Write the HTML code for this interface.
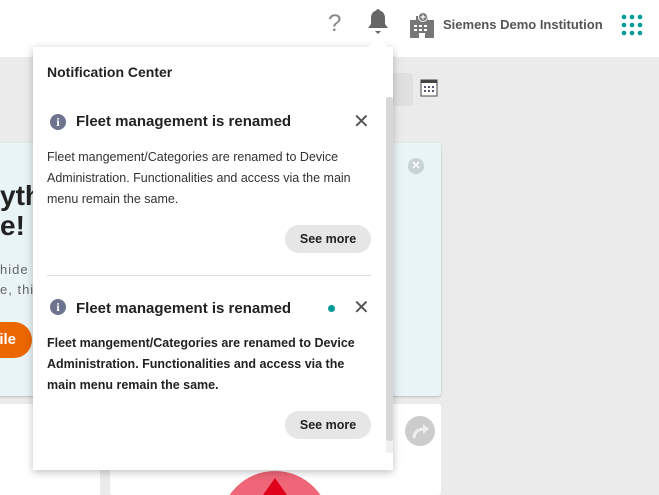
<!DOCTYPE html>
<html style="overflow:hidden;width:659px;height:495px"><head><style>
*{margin:0;padding:0;box-sizing:border-box}
html,body{width:659px;height:495px;overflow:hidden}
body{background:#ebebeb;font-family:"Liberation Sans",sans-serif}
#w{position:relative;width:659px;height:495px;overflow:hidden}
.hdr{position:absolute;left:0;top:0;width:659px;height:57px;background:#fff}
.abs{position:absolute}
.panel{position:absolute;left:33px;top:47px;width:360px;height:423px;background:#fff;box-shadow:0 2px 8px rgba(0,0,0,.25)}
.t{font-weight:bold;font-size:15px;color:#222}
.body{font-size:12.5px;line-height:21px;color:#333}
.btn{position:absolute;width:86px;height:28px;border-radius:14px;background:#e6e6e6;font-weight:bold;font-size:12.5px;text-align:center;line-height:28px;color:#222}
.info{position:absolute;width:16px;height:16px;border-radius:50%;background:#6e7390;color:#fff;font-size:12px;font-weight:bold;text-align:center;line-height:16px;font-family:"Liberation Serif",serif}
.x{position:absolute;font-size:20px;color:#555;line-height:20px}
svg{display:block}
</style></head><body><div id="w">
<div class="hdr"></div>
<div class="abs" style="left:328px;top:10px;font-size:24px;color:#888">?</div>
<svg class="abs" style="left:366px;top:8px" width="24" height="28" viewBox="0 0 24 28"><path d="M12 1c1 0 1.5.6 1.5 1.4C17 3.4 19 6 19 10v6l3 4H2l3-4v-6c0-4 2-6.6 5.5-7.6C10.5 1.6 11 1 12 1z" fill="#666"/><path d="M9 23h6l-3 3z" fill="#666"/></svg>
<svg class="abs" style="left:410px;top:12px" width="24" height="26" viewBox="0 0 24 26"><rect x="0" y="8" width="24" height="18" fill="#777"/><rect x="6" y="4" width="12" height="6" fill="#777"/><circle cx="13" cy="5" r="4.5" fill="#777" stroke="#fff" stroke-width="1"/><path d="M13 2.5v5M10.5 5h5" stroke="#fff" stroke-width="1.2"/><g fill="#fff"><rect x="4" y="13" width="3" height="2"/><rect x="9" y="13" width="3" height="2"/><rect x="14" y="13" width="3" height="2"/><rect x="4" y="17" width="3" height="2"/><rect x="9" y="17" width="3" height="2"/><rect x="14" y="17" width="3" height="2"/><rect x="9" y="21" width="6" height="5"/></g></svg>
<div class="abs" style="left:443px;top:17px;font-size:13px;font-weight:bold;color:#555">Siemens Demo Institution</div>
<svg class="abs" style="left:620px;top:14px" width="24" height="24"><g fill="#009999"><circle cx="4" cy="3" r="2.3"/><circle cx="12" cy="3" r="2.3"/><circle cx="20" cy="3" r="2.3"/><circle cx="4" cy="11" r="2.3"/><circle cx="12" cy="11" r="2.3"/><circle cx="20" cy="11" r="2.3"/><circle cx="4" cy="19" r="2.3"/><circle cx="12" cy="19" r="2.3"/><circle cx="20" cy="19" r="2.3"/></g></svg>
<div class="abs" style="left:380px;top:73px;width:33px;height:33px;background:#e0e0e0;border-radius:3px"></div>
<svg class="abs" style="left:420px;top:79px" width="18" height="18"><rect x="1" y="1" width="16" height="16" fill="#fff" stroke="#444"/><rect x="1" y="1" width="16" height="3" fill="#444"/><g fill="#557"><rect x="4" y="7" width="2" height="2"/><rect x="8" y="7" width="2" height="2"/><rect x="12" y="7" width="2" height="2"/><rect x="4" y="11" width="2" height="2"/><rect x="8" y="11" width="2" height="2"/><rect x="12" y="11" width="2" height="2"/></g></svg>
<div class="abs" style="left:-5px;top:143px;width:446px;height:253px;background:#e8f4f6;border-radius:3px;box-shadow:0 1px 2px rgba(0,0,0,.2)"></div>
<div class="abs" style="left:0;top:181px;font-size:28px;font-weight:bold;color:#222;line-height:30px">yth<br>e!</div>
<div class="abs" style="left:0;top:260px;font-size:13px;color:#666;line-height:20px;letter-spacing:1px">hide t<br>e, this</div>
<div class="abs" style="left:-30px;top:322px;width:62px;height:36px;border-radius:18px;background:#ec6602;color:#fff;font-size:15px;font-weight:bold;line-height:36px;text-align:right;padding-right:16px">ile</div>
<div class="abs" style="left:408px;top:158px;width:16px;height:16px;border-radius:50%;background:#c7d3d5;color:#fff;font-size:11px;font-weight:bold;text-align:center;line-height:16px">✕</div>
<div class="abs" style="left:0;top:404px;width:100px;height:91px;background:#fff"></div>
<div class="abs" style="left:110px;top:404px;width:331px;height:91px;background:#fff;border-radius:3px"></div>
<div class="abs" style="left:405px;top:416px;width:30px;height:30px;border-radius:50%;background:#ccc"></div>
<svg class="abs" style="left:405px;top:416px" width="30" height="30"><path d="M9 22c0-6 4-9 11-9" stroke="#eee" stroke-width="3" fill="none"/><path d="M18 8l6 5-6 5z" fill="#eee"/></svg>
<svg class="abs" style="left:220px;top:471px" width="110" height="24"><circle cx="55" cy="55" r="55" fill="#ee6677"/><path d="M55 7l12 17H43z" fill="#e0001a"/></svg>
<div class="panel">
 <div class="abs t" style="left:14px;top:17px;font-size:14px">Notification Center</div>
 <div class="abs" style="left:353px;top:50px;width:7px;height:356px;background:#f0f0f0"></div>
 <div class="abs" style="left:353px;top:50px;width:7px;height:344px;background:#d8d8d8;border-radius:3px"></div>
 <div class="info" style="left:17px;top:67px">i</div>
 <div class="abs t" style="left:43px;top:66px">Fleet management is renamed</div>
 <div class="x" style="left:320px;top:65px">✕</div>
 <div class="abs body" style="left:14px;top:100px;width:320px">Fleet mangement/Categories are renamed to Device Administration. Functionalities and access via the main menu remain the same.</div>
 <div class="btn" style="left:252px;top:178px">See more</div>
 <div class="abs" style="left:14px;top:228px;width:324px;height:1px;background:#ddd"></div>
 <div class="info" style="left:17px;top:252px">i</div>
 <div class="abs t" style="left:43px;top:253px">Fleet management is renamed</div>
 <div class="abs" style="left:295px;top:258px;width:7px;height:7px;border-radius:50%;background:#009999"></div>
 <div class="x" style="left:320px;top:251px">✕</div>
 <div class="abs body" style="left:14px;top:286px;width:312px;font-weight:bold;color:#222">Fleet mangement/Categories are renamed to Device Administration. Functionalities and access via the main menu remain the same.</div>
 <div class="btn" style="left:252px;top:364px">See more</div>
</div>
<svg class="abs" style="left:367px;top:38px" width="22" height="10"><path d="M0 10L11 0l11 10z" fill="#fff"/></svg>
</div></body></html>
